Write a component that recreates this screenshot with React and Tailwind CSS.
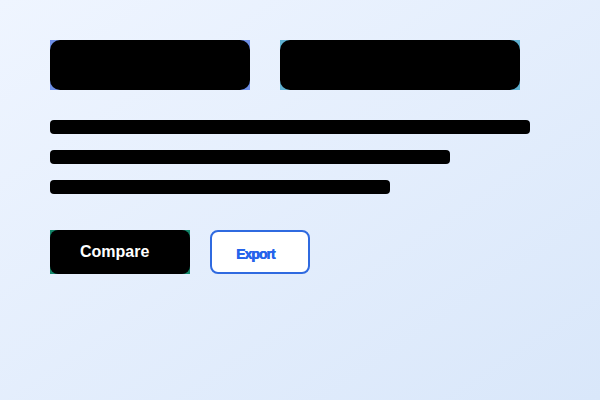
import React from "react";

export default function App() {
  return (
    <div
      className="w-[600px] h-[400px] bg-gradient-to-br from-[#eff5ff] to-[#d9e7fa] pl-[50px] pt-[40px] flex flex-col"
      style={{ fontFamily: '"Liberation Sans", Arial, sans-serif' }}
    >
      <div className="flex gap-[30px]">
        <div className="w-[200px] h-[50px] bg-[#6e8fe6]">
          <div className="w-full h-full bg-black rounded-[10px]" />
        </div>
        <div className="w-[240px] h-[50px] bg-[#5fb1d1]">
          <div className="w-full h-full bg-black rounded-[10px]" />
        </div>
      </div>
      <div className="mt-[30px] flex flex-col gap-[16px]">
        <div className="w-[480px] h-[14px] bg-black rounded-[4px]" />
        <div className="w-[400px] h-[14px] bg-black rounded-[4px]" />
        <div className="w-[340px] h-[14px] bg-black rounded-[4px]" />
      </div>
      <div className="mt-[36px] flex gap-[20px]">
        <div className="w-[140px] h-[44px] bg-[#14876b]">
          <button className="w-full h-full bg-black rounded-[8px] flex items-center pl-[30px] text-white text-[16px] font-bold">
            Compare
          </button>
        </div>
        <button className="w-[100px] h-[44px] bg-white border-2 border-[#2f6ae0] rounded-[8px] flex items-center pl-[24px] pt-[4px] text-[#2563eb] text-[14px] font-bold tracking-[-1px] [text-shadow:0.6px_0_0_#2563eb]">
          Export
        </button>
      </div>
    </div>
  );
}
